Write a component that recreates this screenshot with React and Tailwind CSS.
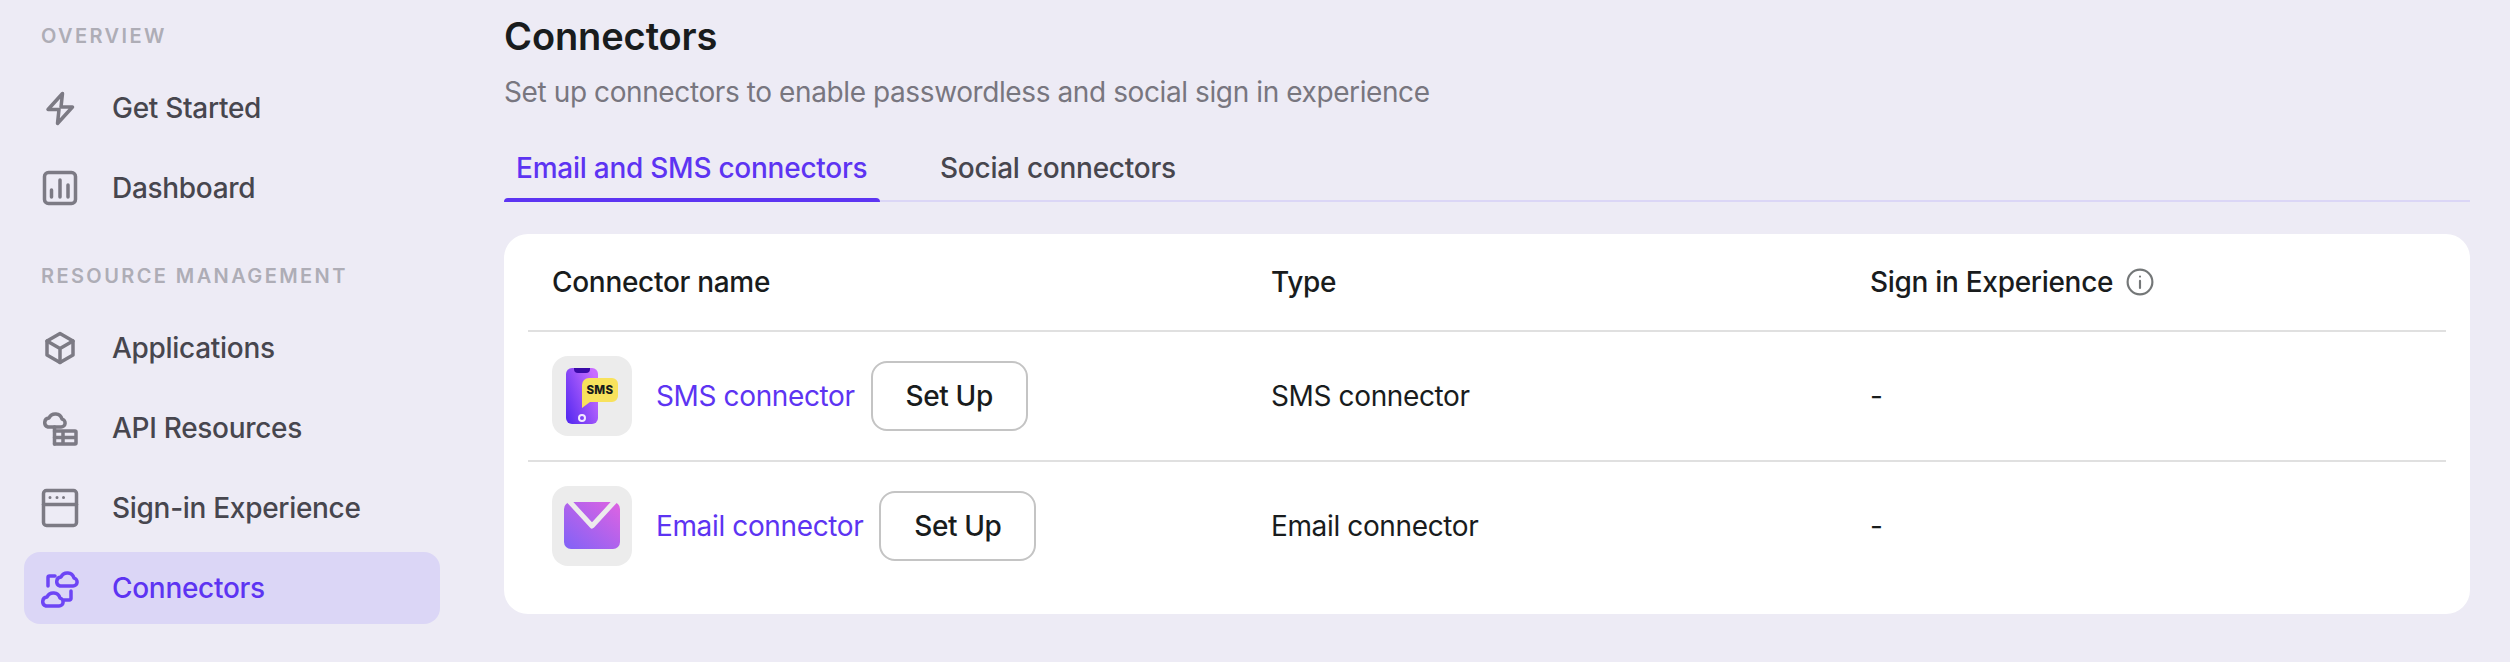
import React from "react";

const ic = "w-10 h-10 shrink-0";
const stroke = { fill: "none", stroke: "currentColor", strokeWidth: 3.5, strokeLinecap: "round", strokeLinejoin: "round" };
const cloud = "M5 16H18a4 4 0 0 0 1-7.9A7 7 0 0 0 6 7a4.6 4.6 0 0 0-1 9Z";

const Zap = () => (
  <svg viewBox="0 0 40 40" className={ic} {...stroke}><path d="M22.500 5.500 8 21.500H19L17.500 35.500 32.500 19H21Z" /></svg>
);
const Dash = () => (
  <svg viewBox="0 0 40 40" className={ic} {...stroke}>
    <rect x="4.500" y="4.500" width="31" height="31" rx="4" />
    <path d="M11.500 22v7M20 12v17M28 17v12" />
  </svg>
);
const Cube = () => (
  <svg viewBox="0 0 40 40" className={ic} {...stroke}>
    <path d="M20 5.500 33 13v14l-13 7.500L7 27V13Z" />
    <path d="M7 13l13 7.500L33 13M20 20.500v14" />
  </svg>
);
const Api = () => (
  <svg viewBox="0 0 40 40" className={ic} {...stroke}>
    <path d={cloud} transform="translate(3 3)" />
    <path d="M14.500 19v17" />
    <path d="M14.500 23H35a1 1 0 0 1 1 1v11a1 1 0 0 1-1 1H14.500M14.500 29.500H36M23 23v13" />
  </svg>
);
const Browser = () => (
  <svg viewBox="0 0 40 40" className={ic} {...stroke}>
    <rect x="3.500" y="2.500" width="33" height="35" rx="3" />
    <path d="M3.500 16.500h33" />
    <path d="M10 9.500h.01M17 9.500h.01M23.500 9.500h.01" strokeWidth="3" />
  </svg>
);
const Conn = () => (
  <svg viewBox="0 0 40 40" className={ic} {...stroke}>
    <path d={cloud} transform="translate(15 2)" />
    <path d={cloud} transform="translate(1 22)" />
    <path d="M15 8H9.500A1.500 1.500 0 0 0 8 9.500V18" />
    <path d="M31 23v7.500a1.500 1.500 0 0 1-1.500 1.500H24" />
  </svg>
);

const Item = ({ icon, label, active }) => (
  <div className={`flex items-center h-[72px] pl-4 gap-[32px] rounded-2xl text-[28px] tracking-[-0.3px] font-medium leading-9 ${active ? "bg-[#dbd6f6] text-[#5d34f2]" : "text-[#47464e]"}`}>
    <span className={active ? "text-[#6d45f5]" : "text-[#7c7a84]"}>{icon}</span>
    <span>{label}</span>
  </div>
);

const Label = ({ children, className }) => (
  <div className={`pl-[17px] text-[20px] leading-7 font-semibold tracking-[2.4px] text-[#aeadb6] ${className}`}>{children}</div>
);

const SmsIcon = () => (
  <svg viewBox="0 0 80 80" className="w-20 h-20">
    <defs>
      <linearGradient id="ph" x1="0" y1="1" x2="1" y2="0.3">
        <stop offset="0" stopColor="#4f26f0" />
        <stop offset="1" stopColor="#c86dff" />
      </linearGradient>
    </defs>
    <rect x="14" y="12" width="32" height="56" rx="6" fill="url(#ph)" />
    <path d="M22 12h16v1a4 4 0 0 1-4 4H26a4 4 0 0 1-4-4Z" fill="#3a0aa8" />
    <circle cx="30" cy="62" r="3" fill="none" stroke="#f2e8ff" strokeWidth="2" />
    <path d="M37 22h23a6 6 0 0 1 6 6v12a6 6 0 0 1-6 6H38l-8 6V29a7 7 0 0 1 7-7Z" fill="#f8e25c" />
    <text x="48" y="38" textAnchor="middle" fontSize="11.500" fontWeight="800" fontFamily="Inter, sans-serif" fill="#191c1d" letterSpacing="0.4">SMS</text>
  </svg>
);

const MailIcon = () => (
  <svg viewBox="0 0 80 80" className="w-20 h-20">
    <defs>
      <linearGradient id="ml" x1="0" y1="1" x2="1" y2="0">
        <stop offset="0" stopColor="#8062f7" />
        <stop offset="1" stopColor="#df63e2" />
      </linearGradient>
    </defs>
    <rect x="12" y="16" width="56" height="47" rx="7" fill="url(#ml)" />
    <path d="M17 15 40 40 63 15" fill="none" stroke="#ececec" strokeWidth="5" strokeLinejoin="round" />
    <rect x="10" y="13" width="60" height="3" fill="#ececec" />
  </svg>
);

const Row = ({ icon, name, last }) => (
  <div className={`grid grid-cols-[719px_599px_600px] items-center text-[28px] tracking-[-0.37px] text-[#191c1d] ${last ? "h-[128px]" : "h-[130px] border-b-2 border-[#e0e0e0]"}`}>
    <div className="flex items-center pl-6">
      <div className="w-20 h-20 rounded-2xl bg-[#ececec] shrink-0">{icon}</div>
      <span className="ml-6 text-[#5d34f2]">{name}</span>
      <button className="ml-4 w-[157px] h-[70px] rounded-2xl border-2 border-[#c4c4c4] font-medium text-[#191c1d] bg-white">Set Up</button>
    </div>
    <div className="pl-6">{name}</div>
    <div className="pl-6">-</div>
  </div>
);

export default function App() {
  return (
    <div className="flex w-[2510px] h-[662px] overflow-hidden bg-[#edebf5]" style={{ fontFamily: "Inter, 'Noto Sans', sans-serif" }}>
      <aside className="w-[504px] shrink-0 pl-6 pr-16 pt-[22px]">
        <Label>OVERVIEW</Label>
        <div className="mt-[22px] flex flex-col gap-2">
          <Item icon={<Zap />} label="Get Started" />
          <Item icon={<Dash />} label="Dashboard" />
        </div>
        <Label className="mt-[38px]">RESOURCE MANAGEMENT</Label>
        <div className="mt-[22px] flex flex-col gap-2">
          <Item icon={<Cube />} label="Applications" />
          <Item icon={<Api />} label="API Resources" />
          <Item icon={<Browser />} label="Sign-in Experience" />
          <Item icon={<Conn />} label="Connectors" active />
        </div>
      </aside>
      <main className="flex-1 pr-10 pt-2">
        <h1 className="text-[38px] leading-[56px] tracking-[-0.1px] font-semibold text-[#191c1d]">Connectors</h1>
        <p className="mt-[10px] text-[28px] tracking-[-0.4px] leading-9 text-[#78767f]">Set up connectors to enable passwordless and social sign in experience</p>
        <div className="mt-6 flex h-[68px] border-b-2 border-[#dbd6f6]">
          <div className="relative h-[68px] w-[376px] px-3 flex items-center whitespace-nowrap text-[28px] tracking-[-0.25px] font-medium text-[#5d34f2]">
            Email and SMS connectors
            <div className="absolute left-0 right-0 bottom-0 h-1 rounded-t bg-[#5d34f2]" />
          </div>
          <div className="h-[68px] ml-[48px] px-3 flex items-center whitespace-nowrap text-[28px] tracking-[-0.25px] font-medium text-[#47464e]">Social connectors</div>
        </div>
        <div className="mt-8 h-[380px] rounded-3xl bg-white px-6">
          <div className="grid grid-cols-[719px_599px_600px] h-[98px] items-center border-b-2 border-[#e0e0e0] text-[28px] tracking-[-0.3px] font-medium text-[#191c1d]">
            <div className="pl-6">Connector name</div>
            <div className="pl-6">Type</div>
            <div className="pl-6 flex items-center gap-[13px]">
              Sign in Experience
              <svg viewBox="0 0 26 26" className="w-7 h-7" fill="none" stroke="#747778" strokeWidth="2" strokeLinecap="round">
                <circle cx="13" cy="13" r="11.500" />
                <path d="M13 12v6.500M13 8h.01" />
              </svg>
            </div>
          </div>
          <Row icon={<SmsIcon />} name="SMS connector" />
          <Row icon={<MailIcon />} name="Email connector" last />
        </div>
      </main>
    </div>
  );
}
